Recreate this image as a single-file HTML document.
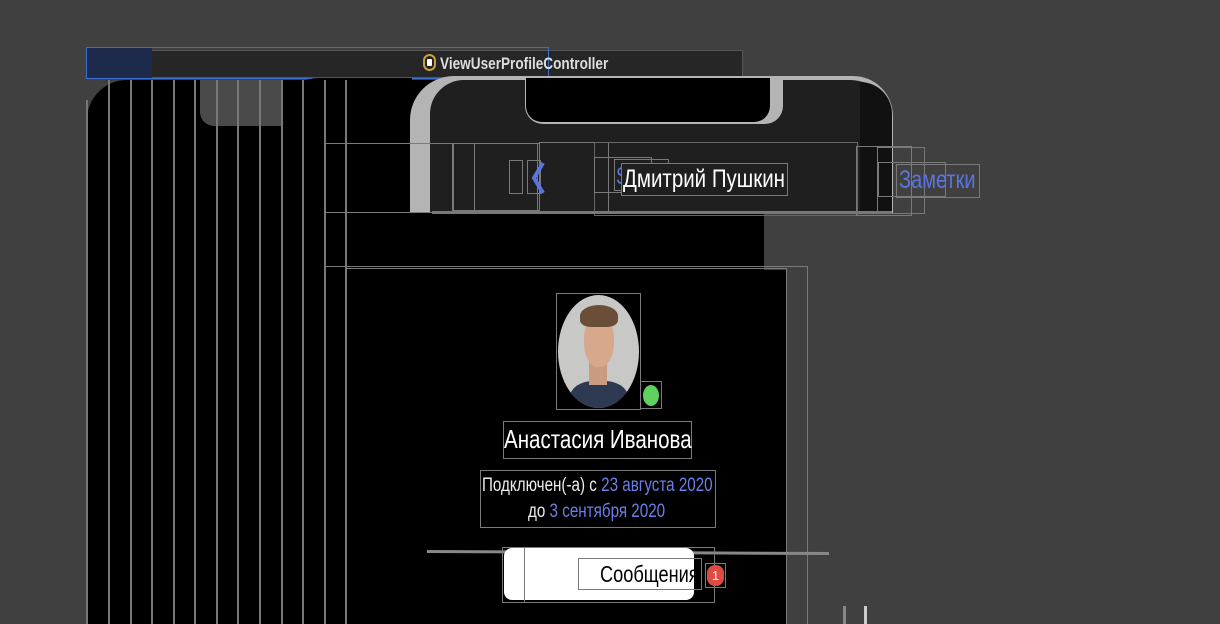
<!DOCTYPE html>
<html><head><meta charset="utf-8"><style>
*{margin:0;padding:0;box-sizing:border-box}
html,body{width:1220px;height:624px;overflow:hidden}
body{background:#404040;position:relative;font-family:"Liberation Sans","DejaVu Sans",sans-serif}
.a{position:absolute}
.t{position:absolute;transform-origin:0 0;white-space:nowrap}
.b{position:absolute;border:1.5px solid #7a7a7a}
.v{position:absolute;width:2px;background:#777;top:80px;bottom:0}
</style></head><body>
<div class="a" style="left:150px;top:50px;width:593px;height:28px;background:#262626;border:1px solid #555"></div>
<div class="a" style="left:86px;top:47px;width:463px;height:32px;border:1.5px solid #3b6fd0"></div>
<div class="a" style="left:87px;top:48px;width:65px;height:30px;background:#1d2a4c"></div>
<div class="a" style="left:423px;top:54px;width:13px;height:17px;border:2px solid #c9a13a;border-radius:7px;background:#222"><div class="a" style="left:2px;top:3px;width:5px;height:7px;background:#fff;border-radius:1px"></div></div>
<div class="t" style="left:440px;top:54px;font-size:17px;font-weight:bold;color:#ddd;transform:scaleX(0.8)">ViewUserProfileController</div>

<div class="a" style="left:87px;top:80px;width:700px;height:544px;background:#000;border-top-left-radius:40px"></div>
<div class="a" style="left:200px;top:80px;width:82px;height:46px;background:#4a4a4a;border-bottom-left-radius:14px"></div>
<div class="a" style="left:282px;top:78px;width:130px;height:50px;background:#000;border-top-left-radius:36px"></div>
<div class="a" style="left:764px;top:212px;width:60px;height:58px;background:#404040"></div>
<div class="a" style="left:786px;top:270px;width:40px;height:354px;background:#404040"></div>

<div class="v" style="left:86px;top:100px"></div><div class="v" style="left:108px"></div><div class="v" style="left:130px"></div>
<div class="v" style="left:151px"></div><div class="v" style="left:173px"></div><div class="v" style="left:194px"></div>
<div class="v" style="left:216px"></div><div class="v" style="left:237px"></div><div class="v" style="left:259px"></div>
<div class="v" style="left:281px"></div><div class="v" style="left:302px"></div><div class="v" style="left:324px"></div>
<div class="v" style="left:345px"></div>

<div class="a" style="left:410px;top:76px;width:483px;height:137px;background:#b4b4b4;border-top-left-radius:44px;border-top-right-radius:40px"></div>
<div class="a" style="left:430px;top:80px;width:460px;height:133px;background:#1f1f1f;border-top-left-radius:34px;border-top-right-radius:40px"></div>
<div class="a" style="left:525px;top:78px;width:258px;height:46px;background:#b4b4b4;border-radius:0 0 18px 18px"></div>
<div class="a" style="left:526px;top:78px;width:244px;height:44px;background:#000;border-radius:0 0 16px 16px"></div>
<div class="a" style="left:860px;top:82px;width:32px;height:130px;background:#111;border-top-right-radius:36px"></div>

<div class="b" style="left:324px;top:143px;width:130px;height:70px;border-left-width:2px"></div>
<div class="b" style="left:452px;top:143px;width:86px;height:68px"></div>
<div class="b" style="left:474px;top:143px;width:66px;height:68px"></div>
<div class="b" style="left:539px;top:142px;width:70px;height:70px"></div>
<div class="b" style="left:594px;top:142px;width:264px;height:74px;border-color:#666"></div>
<div class="b" style="left:509px;top:160px;width:14px;height:34px"></div>
<div class="b" style="left:527px;top:160px;width:14px;height:34px"></div>
<div class="b" style="left:594px;top:157px;width:58px;height:36px"></div>
<div class="b" style="left:614px;top:159px;width:55px;height:32px"></div>
<svg class="a" style="left:528px;top:160px" width="20" height="36"><path d="M15 3 L6 18 L15 33" stroke="#5a74e0" stroke-width="4" fill="none"/></svg>
<div class="t" style="left:616px;top:163px;font-size:24px;color:#5a74e0;transform:scaleX(0.75)">Sp</div>
<div class="b" style="left:621px;top:163px;width:167px;height:33px;background:#1f1f1f"></div>
<div class="t" style="left:623px;top:165px;font-size:25px;color:#fff;transform:scaleX(0.82)">Дмитрий Пушкин</div>
<div class="b" style="left:856px;top:146px;width:56px;height:70px"></div>
<div class="b" style="left:877px;top:147px;width:48px;height:67px"></div>
<div class="b" style="left:878px;top:162px;width:68px;height:35px"></div>
<div class="b" style="left:896px;top:164px;width:84px;height:34px"></div>
<div class="t" style="left:899px;top:166px;font-size:25px;color:#5a74e0;transform:scaleX(0.8)">Заметки</div>
<div class="a" style="left:432px;top:211px;width:460px;height:3px;background:#777"></div>

<div class="b" style="left:324px;top:266px;width:484px;height:370px"></div>
<div class="b" style="left:345px;top:268px;width:442px;height:370px"></div>

<div class="b" style="left:556px;top:293px;width:85px;height:117px"></div>
<div class="a" style="left:558px;top:295px;width:81px;height:113px;border-radius:50%;background:#c8c8c6;overflow:hidden">
 <div class="a" style="left:12px;top:86px;width:58px;height:40px;border-radius:40% 40% 0 0;background:#2e3a52"></div>
 <div class="a" style="left:31px;top:64px;width:18px;height:26px;background:#c99b80"></div>
 <div class="a" style="left:26px;top:20px;width:30px;height:52px;border-radius:45%;background:#d7a88c"></div>
 <div class="a" style="left:22px;top:10px;width:38px;height:22px;border-radius:50% 50% 30% 30%;background:#6a4e38"></div>
</div>
<div class="b" style="left:640px;top:381px;width:22px;height:28px"></div>
<div class="a" style="left:643px;top:385px;width:16px;height:21px;border-radius:50%;background:#5ed15e"></div>

<div class="b" style="left:503px;top:421px;width:189px;height:38px"></div>
<div class="t" style="left:504px;top:424px;font-size:26px;color:#fff;transform:scaleX(0.79)">Анастасия Иванова</div>
<div class="b" style="left:480px;top:470px;width:236px;height:58px"></div>
<div class="t" style="left:482px;top:475px;font-size:19px;color:#eee;transform:scaleX(0.8)">Подключен(-а) с <span style="color:#6a80e8">23 августа 2020</span></div>
<div class="t" style="left:528px;top:501px;font-size:19px;color:#eee;transform:scaleX(0.8)">до <span style="color:#6a80e8">3 сентября 2020</span></div>

<div class="a" style="left:427px;top:551px;width:402px;height:3px;background:#888;transform:rotate(0.3deg)"></div>
<div class="a" style="left:504px;top:548px;width:190px;height:52px;background:#fff;border-radius:8px"></div>
<div class="b" style="left:502px;top:547px;width:213px;height:56px"></div>
<div class="b" style="left:524px;top:547px;width:0;height:56px;border-width:0 0 0 1.5px"></div>
<div class="b" style="left:578px;top:558px;width:124px;height:32px"></div>
<div class="t" style="left:600px;top:561px;font-size:23px;color:#000;transform:scaleX(0.79)">Сообщения</div>
<div class="b" style="left:705px;top:563px;width:21px;height:25px"></div>
<div class="a" style="left:707px;top:565px;width:17px;height:21px;border-radius:8px;background:#e04a40;color:#fff;font-size:13px;text-align:center;line-height:21px">1</div>

<div class="a" style="left:843px;top:606px;width:3px;height:18px;background:#888"></div>
<div class="a" style="left:864px;top:606px;width:3px;height:18px;background:#ccc"></div>
</body></html>
